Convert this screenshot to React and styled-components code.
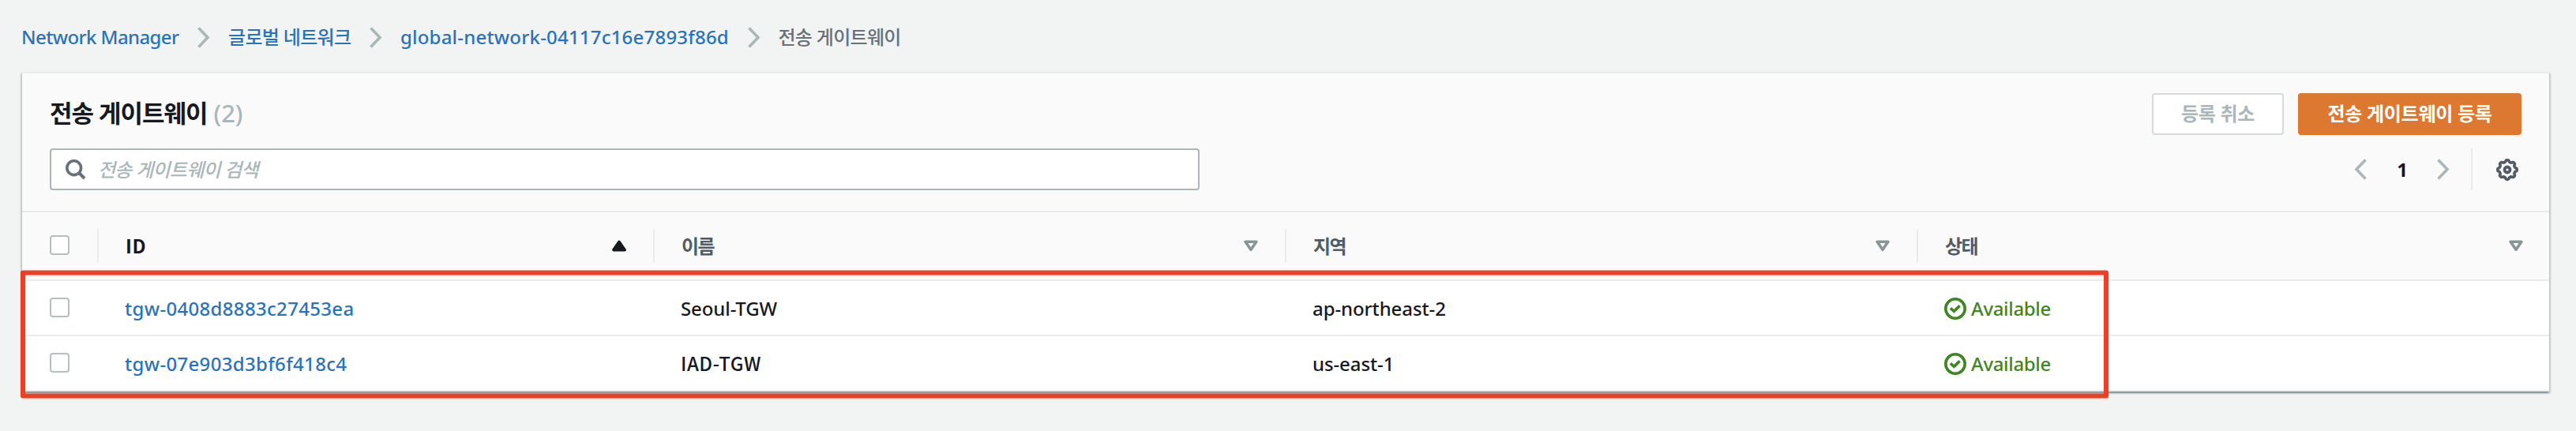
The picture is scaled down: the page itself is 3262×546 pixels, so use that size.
import React from "react";
import styled, { createGlobalStyle, css } from "styled-components";

const color = {
  page: "#f2f4f4",
  head: "#fafafa",
  line: "#ebebeb",
  link: "#2b73b9",
  text: "#16191f",
  label: "#545b64",
  muted: "#687078",
  disabled: "#aab7b8",
  ok: "#3f8624",
  primary: "#dd7831",
  mark: "#ee3f24",
};

const GlobalStyle = createGlobalStyle`
  *, *::before, *::after { box-sizing: border-box; }
  body {
    margin: 0;
    background: ${color.page};
    color: ${color.text};
    font-family: "Noto Sans", "Noto Sans CJK KR", sans-serif;
    font-size: 24px;
    font-weight: 500;
    line-height: 32px;
  }
`;

const Page = styled.div`
  height: 546px;
  padding: 31px 34px 0 28px;
  overflow: hidden;
  white-space: nowrap;
`;

const Breadcrumbs = styled.nav`
  display: flex;
  align-items: center;
  height: 32px;
  margin: 0 0 28px -1px;
`;

const Crumb = styled.a`
  color: ${color.link};
  letter-spacing: ${(p) => p.$tracking}px;
`;

const CurrentCrumb = styled.span`
  color: ${color.muted};
  letter-spacing: -0.7px;
`;

const CrumbArrow = styled.span`
  display: flex;
  margin: 0 22.5px 0 24px;
`;

const Panel = styled.section`
  position: relative;
  border-top: 2px solid ${color.line};
  background: #fff;
  box-shadow: 0 2px 2px 0 rgba(0, 28, 36, 0.3),
    2px 2px 2px 0 rgba(0, 28, 36, 0.15), -2px 2px 2px 0 rgba(0, 28, 36, 0.15);
`;

const PanelHead = styled.header`
  display: flex;
  flex-direction: column;
  gap: 17px;
  padding: 25px 35px 26px;
  background: ${color.head};
  border-bottom: 2px solid ${color.line};
`;

const HeadRow = styled.div`
  display: flex;
  align-items: center;
  justify-content: space-between;
  height: 53px;
`;

const Title = styled.h2`
  margin: 0;
  padding-bottom: 3px;
  font-size: 31px;
  font-weight: 700;
  line-height: 40px;
  letter-spacing: -1.03px;
`;

const Count = styled.span`
  margin-left: 8px;
  color: ${color.disabled};
  font-weight: 500;
  letter-spacing: 0;
`;

const Actions = styled.div`
  display: flex;
  gap: 18px;
`;

const Button = styled.button`
  height: 53px;
  width: ${(p) => p.$width}px;
  padding: 0 0 2px;
  border: 2px solid #d5dbdb;
  border-radius: 4px;
  background: #fff;
  color: ${color.disabled};
  font: inherit;
  font-weight: 700;
  letter-spacing: -0.28px;
  ${(p) =>
    p.$primary &&
    css`
      border-color: ${color.primary};
      background: ${color.primary};
      color: #fff;
    `}
`;

const SearchBox = styled.div`
  display: flex;
  align-items: center;
  width: 1456px;
  height: 53px;
  padding-left: 18px;
  border: 2px solid ${color.disabled};
  border-radius: 4px;
  background: #fff;
`;

const Placeholder = styled.span`
  margin-left: 15px;
  color: ${color.disabled};
  font-style: italic;
  letter-spacing: -0.75px;
`;

const Pager = styled.div`
  display: flex;
  align-items: center;
  height: 53px;
  padding-right: 4px;
`;

const PageNumber = styled.span`
  width: 89px;
  padding-left: 1px;
  text-align: center;
  font-weight: 700;
`;

const PagerDivider = styled.span`
  width: 2px;
  height: 53px;
  margin: 0 30px 0 27px;
  background: ${color.line};
`;

const TableRow = styled.div`
  display: grid;
  grid-template-columns: 97px 704px 800px 800px 799px;
  align-items: center;
  height: 70px;
  border-bottom: 2px solid ${color.line};
`;

const TableHead = styled(TableRow)`
  height: 87px;
  background: ${color.head};
`;

const HeadCell = styled.div`
  display: flex;
  align-items: center;
  justify-content: space-between;
  height: 43px;
  padding: 0 34px;
  border-right: 2px solid ${color.line};
  color: ${(p) => (p.$sorted ? color.text : color.label)};
  font-weight: 700;
  letter-spacing: -1.5px;
  &:last-child {
    padding-right: 33px;
    border-right: 0;
  }
`;

const Cell = styled.div`
  display: flex;
  align-items: center;
  padding: 1px 0 0 33px;
  letter-spacing: -0.1px;
`;

const PlainCap = styled.span`
  padding-bottom: 2px;
  font-family: "Noto Sans CJK KR", sans-serif;
  letter-spacing: 0.5px;
`;

const GatewayLink = styled.a`
  color: ${color.link};
  letter-spacing: 0.32px;
`;

const Status = styled.span`
  display: flex;
  align-items: center;
  gap: 6px;
  color: ${color.ok};
  letter-spacing: -0.33px;
`;

const CheckCell = styled.div`
  display: flex;
  align-items: center;
  height: 43px;
  padding-left: 35px;
  ${(p) =>
    p.$divided &&
    css`
      border-right: 2px solid ${color.line};
    `}
`;

const Checkbox = styled.span`
  width: 25px;
  height: 25px;
  margin-bottom: ${(p) => p.$lift || 0}px;
  border: 2px solid #b4bfc0;
  border-radius: 4px;
  background: #fff;
`;

const Highlight = styled.svg`
  position: absolute;
  left: -2px;
  top: 249px;
`;

const Chevron = ({ left }) => (
  <svg width="16" height="27" viewBox="0 0 16 27" fill="none">
    <path
      d={left ? "M14.5 1.5 3 13.5 14.5 25.5" : "M1.5 1.5 13 13.5 1.5 25.5"}
      stroke={color.disabled}
      strokeWidth="3.6"
    />
  </svg>
);

const SearchIcon = () => (
  <svg width="26" height="26" viewBox="0 0 26 26" fill="none" stroke={color.muted}>
    <circle cx="10.7" cy="10.7" r="8.9" strokeWidth="3.6" />
    <path d="m17 17 7 7" strokeWidth="4" />
  </svg>
);

const gearPath =
  Array.from({ length: 96 }, (_, i) => {
    const a = (i / 96) * Math.PI * 2;
    const r = 11.1 + 1.15 * Math.tanh(2 * Math.cos(8 * a));
    const x = (14 + r * Math.cos(a)).toFixed(2);
    const y = (14 + r * Math.sin(a)).toFixed(2);
    return `${i ? "L" : "M"}${x} ${y}`;
  }).join("") + "Z";

const GearIcon = () => (
  <svg width="28" height="28" viewBox="0 0 28 28" fill="none" stroke={color.label}>
    <path d={gearPath} strokeWidth="3.6" strokeLinejoin="round" />
    <circle cx="14" cy="14" r="3.5" strokeWidth="3.8" />
  </svg>
);

const SortIcon = ({ sorted }) => (
  <svg width="18" height="15" viewBox="0 0 18 15" strokeWidth="3.6" strokeLinejoin="round">
    {sorted ? (
      <path d="M9 2.4 16.1 12.6H1.9Z" fill={color.text} stroke={color.text} />
    ) : (
      <path d="M2.1 2.2H15.9L9 12.2Z" fill="#fff" stroke="#879596" />
    )}
  </svg>
);

const CheckIcon = () => (
  <svg width="28" height="28" viewBox="0 0 28 28" fill="none" stroke={color.ok} strokeWidth="3.6">
    <circle cx="14" cy="14" r="12.2" />
    <path d="m7.8 13.4 4.6 4 7.2-7" />
  </svg>
);

const columns = ["이름", "지역", "상태"];

const gateways = [
  { id: "tgw-0408d8883c27453ea", name: "Seoul-TGW", region: "ap-northeast-2" },
  { id: "tgw-07e903d3bf6f418c4", name: <PlainCap>IAD-TGW</PlainCap>, region: "us-east-1" },
];

export default function App() {
  return (
    <Page>
      <GlobalStyle />
      <Breadcrumbs>
        <Crumb $tracking={-0.62}>Network Manager</Crumb>
        <CrumbArrow><Chevron /></CrumbArrow>
        <Crumb $tracking={-0.67}>글로벌 네트워크</Crumb>
        <CrumbArrow><Chevron /></CrumbArrow>
        <Crumb $tracking={0.2}>global-network-04117c16e7893f86d</Crumb>
        <CrumbArrow><Chevron /></CrumbArrow>
        <CurrentCrumb>전송 게이트웨이</CurrentCrumb>
      </Breadcrumbs>

      <Panel>
        <PanelHead>
          <HeadRow>
            <Title>
              전송 게이트웨이<Count>(2)</Count>
            </Title>
            <Actions>
              <Button $width={167} disabled>등록 취소</Button>
              <Button $width={283} $primary>전송 게이트웨이 등록</Button>
            </Actions>
          </HeadRow>
          <HeadRow>
            <SearchBox>
              <SearchIcon />
              <Placeholder>전송 게이트웨이 검색</Placeholder>
            </SearchBox>
            <Pager>
              <Chevron left />
              <PageNumber>1</PageNumber>
              <Chevron />
              <PagerDivider />
              <GearIcon />
            </Pager>
          </HeadRow>
        </PanelHead>

        <TableHead>
          <CheckCell $divided>
            <Checkbox $lift={3} />
          </CheckCell>
          <HeadCell $sorted>
            <PlainCap>ID</PlainCap>
            <SortIcon sorted />
          </HeadCell>
          {columns.map((c) => (
            <HeadCell key={c}>
              {c}
              <SortIcon />
            </HeadCell>
          ))}
        </TableHead>

        {gateways.map((g) => (
          <TableRow key={g.id}>
            <CheckCell>
              <Checkbox $lift={1} />
            </CheckCell>
            <Cell><GatewayLink>{g.id}</GatewayLink></Cell>
            <Cell>{g.name}</Cell>
            <Cell>{g.region}</Cell>
            <Cell>
              <Status>
                <CheckIcon />
                Available
              </Status>
            </Cell>
          </TableRow>
        ))}

        <Highlight width="2645" height="165" viewBox="0 0 2645 165" fill="none">
          <rect
            x="3"
            y="3.5"
            width="2638"
            height="156"
            stroke={color.mark}
            strokeWidth="6.2"
            strokeLinejoin="round"
          />
        </Highlight>
      </Panel>
    </Page>
  );
}
